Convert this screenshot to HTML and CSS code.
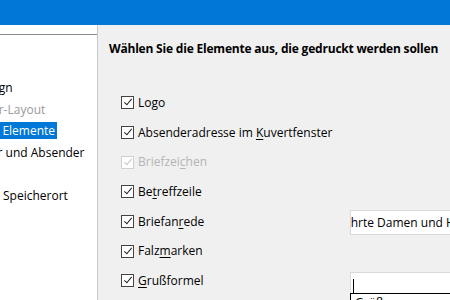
FILE: index.html
```html
<!doctype html>
<html>
	<head>
		<meta http-equiv="Content-Type" content="text/html;charset=UTF-8"/>
		<title>Briefassistent</title>
		<link rel="stylesheet" href="styles.css">
	</head>
<body>
	<div class="window">
		<div class="titlebar"><span class="title">Briefassistent</span></div>
		<div class="main">
			<!--Schritte links-->
			<div class="roadmap">
				<div class="roadmap-head"></div>
				<ul class="steps">
					<li><span>1. Seitendesign</span></li>
					<li class="off"><span>2. Briefpapier-Layout</span></li>
					<li class="on"><span>3. Gedruckte Elemente</span></li>
					<li><span>4. Empfänger und Absender</span></li>
					<li><span>5. Fußzeile</span></li>
					<li><span>6. Name und Speicherort</span></li>
				</ul>
			</div>
			<!--Inhalt rechts-->
			<div class="page">
				<h1 class="heading">Wählen Sie die Elemente aus, die gedruckt werden sollen</h1>
				<div class="rows">
					<label class="row"><i class="box"></i><span>Logo</span></label>
					<div></div>
					<label class="row"><i class="box"></i><span>Absenderadresse im <u>K</u>uvertfenster</span></label>
					<div></div>
					<label class="row off"><i class="box"></i><span>Briefzei<u>c</u>hen</span></label>
					<div></div>
					<label class="row"><i class="box"></i><span>Be<u>t</u>reffzeile</span></label>
					<div></div>
					<label class="row"><i class="box"></i><span>Briefan<u>r</u>ede</span></label>
					<div class="field"><span class="scroll">Sehr geehrte Damen und Herren</span></div>
					<label class="row"><i class="box"></i><span>Falz<u>m</u>arken</span></label>
					<div></div>
					<label class="row"><i class="box"></i><span><u>G</u>rußformel</span></label>
					<div class="combo">
						<div class="field field-focus"><span class="caret"></span></div>
						<div class="dropdown">Grüße</div>
					</div>
				</div>
			</div>
		</div>
	</div>
</body>
</html>
```

FILE: styles.css
```css
*{margin:0;padding:0;}
body{width:450px;height:300px;overflow:hidden;font-family:"Segoe UI","Open Sans",sans-serif;font-size:12px;color:#000;}
.window{height:300px;display:flex;flex-direction:column;}

.titlebar{height:25px;flex:none;background:#0078d7;color:#fff;line-height:25px;font-size:12px;overflow:hidden;white-space:nowrap;}
.title{display:inline-block;margin-left:-81px;}

.main{flex:1;display:flex;min-height:0;}

.roadmap{width:97px;flex:none;background:#fff;border-right:1px solid #c8c8c8;box-shadow:1px 0 0 #e8e8e8;overflow:hidden;}
.roadmap-head{height:9px;border-bottom:1px solid #8c8c8c;}
.steps{list-style:none;margin-left:-74px;padding-top:44px;display:flex;flex-direction:column;gap:3.6px;white-space:nowrap;}
.steps li{height:18px;line-height:18px;}
.steps li span{padding:0 2px;}
.steps li.off{color:#9a9a9a;}
.steps li.on span{background:#0078d7;color:#fff;}

.page{flex:1;background:#f0f0f0;padding:16px 0 0 11px;white-space:nowrap;overflow:hidden;}
.heading{font-size:12px;font-weight:bold;line-height:16px;letter-spacing:-0.2px;}

.rows{display:grid;grid-template-columns:229px 1fr;grid-auto-rows:29.7px;align-items:center;padding:31px 0 0 12px;}
.row{display:flex;align-items:center;height:18px;line-height:18px;}
.row u{text-decoration:underline;text-underline-offset:2px;}
.box{width:11px;height:11px;border:1px solid #444;background:#fff;margin-right:4px;flex:none;position:relative;}
.box:after{content:"";position:absolute;left:4px;top:0px;width:3px;height:7px;border:solid #222;border-width:0 1px 1px 0;transform:rotate(40deg);}
.row.off{color:#b4b4b4;}
.row.off .box{border-color:#d0d0d0;}
.row.off .box:after{border-color:#c4c4c4;}

.field{height:23px;line-height:23px;background:#fff;border:1px solid #d9d9d9;border-right:none;padding-left:2px;overflow:hidden;margin-right:-60px;}
.rows > .field{margin-top:2px;}
.scroll{display:inline-block;margin-left:-51px;}
.combo{position:relative;margin-top:5px;margin-right:-60px;}
.field-focus{height:20px;margin-right:0;}
.caret{display:inline-block;width:1px;height:14px;background:#000;vertical-align:middle;}
.dropdown{position:absolute;left:0;top:21px;right:0;height:20px;border:1px solid #000;background:#fff;padding-left:4px;line-height:18px;}
```
